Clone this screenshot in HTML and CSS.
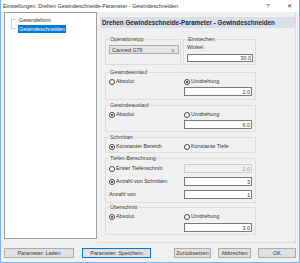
FILE: index.html
```html
<!DOCTYPE html>
<html>
<head>
<meta charset="utf-8">
<title>Einstellungen: Drehen Gewindeschneide-Parameter - Gewindeschneiden</title>
<link rel="stylesheet" href="styles.css">
</head>
<body>
<div class="window">
    <div class="titlebar">
        <span class="title">Einstellungen: Drehen Gewindeschneide-Parameter - Gewindeschneiden</span>
        <span class="tb-help">?</span>
        <span class="tb-close">&#x2715;</span>
    </div>
    <div class="client">
        <div class="tree">
            <svg class="tree-lines" width="7" height="14" viewBox="0 0 7 14">
                <path d="M0.5 3.5 H5 M0.5 3.5 V12.5 H5" stroke="#a0a0a0" stroke-width="1" stroke-dasharray="1 1" fill="none"/>
            </svg>
            <ul class="tree-items">
                <li>Gewindeform</li>
                <li class="sel">Gewindeschneiden</li>
            </ul>
        </div>
        <div class="panel">
            <h1 class="panel-head">Drehen Gewindeschneide-Parameter - Gewindeschneiden</h1>
            <div class="groups">
                <div class="toprow">
                    <fieldset class="grp grp-op">
                        <legend>Operationstyp</legend>
                        <div class="combo"><span>Canned G76</span><span class="arrow">&#x2228;</span></div>
                    </fieldset>
                    <fieldset class="grp grp-ein">
                        <legend>Einstechen</legend>
                        <div class="lbl">Winkel</div>
                        <input class="num" type="text" value="30.0">
                    </fieldset>
                </div>

                <fieldset class="grp grp-einlauf">
                    <legend>Gewindeeinlauf</legend>
                    <div class="row2 radios">
                        <label class="radio"><span class="rb"></span>Absolut</label>
                        <label class="radio"><span class="rb on"></span>Umdrehung</label>
                    </div>
                    <div class="row2 mt2">
                        <span></span>
                        <input class="num" type="text" value="2.0">
                    </div>
                </fieldset>

                <fieldset class="grp grp-auslauf">
                    <legend>Gewindeauslauf</legend>
                    <div class="row2 radios">
                        <label class="radio"><span class="rb on"></span>Absolut</label>
                        <label class="radio"><span class="rb"></span>Umdrehung</label>
                    </div>
                    <div class="row2 mt2">
                        <span></span>
                        <input class="num" type="text" value="6.0">
                    </div>
                </fieldset>

                <fieldset class="grp grp-schnitt">
                    <legend>Schnittart</legend>
                    <div class="row2 radios">
                        <label class="radio"><span class="rb on"></span>Konstanter Bereich</label>
                        <label class="radio"><span class="rb"></span>Konstante Tiefe</label>
                    </div>
                </fieldset>

                <fieldset class="grp grp-tiefe">
                    <legend>Tiefen-Berechnung</legend>
                    <div class="row2 trow first">
                        <label class="radio"><span class="rb"></span>Erster Tiefenschnitt</label>
                        <input class="num off" type="text" value="1.0" disabled>
                    </div>
                    <div class="row2 trow">
                        <label class="radio"><span class="rb on"></span>Anzahl von Schnitten:</label>
                        <input class="num" type="text" value="3">
                    </div>
                    <div class="row2 trow">
                        <span class="plain">Anzahl von</span>
                        <input class="num" type="text" value="1">
                    </div>
                </fieldset>

                <fieldset class="grp grp-ueber">
                    <legend>Überschnitt</legend>
                    <div class="row2 radios">
                        <label class="radio"><span class="rb on"></span>Absolut</label>
                        <label class="radio"><span class="rb"></span>Umdrehung</label>
                    </div>
                    <div class="row2 mt3">
                        <span></span>
                        <input class="num" type="text" value="3.0">
                    </div>
                </fieldset>
            </div>
        </div>
    </div>
    <div class="buttons">
        <button class="btn b-laden">Parameter: Laden</button>
        <button class="btn b-save">Parameter: Speichern</button>
        <button class="btn b-reset">Zurücksetzen</button>
        <button class="btn b-cancel">Abbrechen</button>
        <button class="btn b-ok">OK</button>
    </div>
</div>
</body>
</html>
```

FILE: styles.css
```css
html, body {
    margin: 0;
    padding: 0;
    background: #f0f0f0;
}
body {
    font-family: "Liberation Sans", Arial, sans-serif;
    font-size: 5.4px;
    color: #333333;
}
.window {
    box-sizing: border-box;
    width: 300px;
    height: 263px;
    border: 1px solid #7fb2e8;
    border-top: none;
    background: #f0f0f0;
}
.titlebar {
    height: 12px;
    background: #ffffff;
    display: flex;
    align-items: center;
    line-height: 12px;
}
.title {
    flex: 1;
    padding-left: 2px;
}
.tb-help {
    width: 26px;
    text-align: center;
    font-size: 6px;
    color: #444;
}
.tb-close {
    width: 16px;
    text-align: center;
    font-size: 6px;
    color: #444;
    margin-right: 2px;
}

/* main area */
.client {
    display: flex;
    padding: 0 3px;
}
.tree {
    box-sizing: border-box;
    width: 93px;
    height: 227px;
    border: 1px solid #9a9ea6;
    background: #ffffff;
    display: flex;
    align-items: flex-start;
    padding: 3px 0 0 6px;
}
.tree-lines {
    display: block;
}
.tree-items {
    list-style: none;
    margin: 0;
    padding: 0;
}
.tree-items li {
    height: 9px;
    line-height: 8px;
    padding: 0 1px;
}
.tree-items li.sel {
    background: #0078d7;
    color: #ffffff;
    height: 8px;
}

.panel {
    box-sizing: border-box;
    flex: 1;
    height: 231px;
    border-right: 1px solid #dadada;
    border-bottom: 1px solid #dadada;
}
.panel-head {
    margin: 5px 0 0 3px;
    height: 11px;
    line-height: 11px;
    background: #d9dee7;
    color: #1d2940;
    font-size: 6.3px;
    font-weight: bold;
    padding-left: 2px;
}
.groups {
    width: 151px;
    padding-left: 8px;
}
.toprow {
    display: flex;
    gap: 2px;
    margin-top: 8px;
}
fieldset.grp {
    box-sizing: border-box;
    margin: 0;
    padding: 0 3px;
    border: 1px solid #dcdcdc;
    min-width: 0;
}
fieldset.grp legend {
    padding: 0 1px;
    margin-left: 0;
    line-height: 6px;
    height: 6px;
    color: #3a3a3a;
}
.grp-op {
    width: 76px;
    height: 29px;
}
.grp-ein {
    flex: 1;
    height: 29px;
}
.grp-einlauf { height: 31px; margin-top: 4px !important; }
.grp-auslauf { height: 30px; margin-top: 2px !important; }
.grp-schnitt { height: 19px; margin-top: 2px !important; }
.grp-tiefe   { height: 48px; margin-top: 2px !important; }
.grp-ueber   { height: 31px; margin-top: 1px !important; }

.combo {
    box-sizing: border-box;
    margin-top: 3px;
    width: 70px;
    height: 9px;
    background: #e5e5e5;
    border: 1px solid #acacac;
    display: flex;
    align-items: center;
    justify-content: space-between;
    padding: 0 3px 0 2px;
}
.combo .arrow {
    font-size: 5px;
    color: #666;
}
.lbl {
    margin-top: 2px;
    line-height: 6px;
}
input.num {
    box-sizing: border-box;
    display: block;
    font: inherit;
    color: #333333;
    height: 8px;
    width: 66px;
    margin: 4px 0 0 0;
    padding: 0 1px;
    border: 1px solid #7a7a7a;
    background: #ffffff;
    text-align: right;
}
input.num.off {
    background: #f0f0f0;
    border-color: #cccccc;
    color: #8a8a8a;
}
.row2 {
    display: grid;
    grid-template-columns: 75px 68px;
    align-items: center;
}
.row2 input.num {
    margin: 0;
    width: 68px;
    height: 9px;
}
.radios {
    margin-top: 3px;
    height: 7px;
}
.mt2 { margin-top: 2px; }
.mt3 { margin-top: 3px; }
.trow { margin-top: 4px; }
.trow.first { margin-top: 3px; }
.radio {
    display: flex;
    align-items: center;
    line-height: 7px;
}
.plain {
    line-height: 7px;
}
.rb {
    box-sizing: border-box;
    width: 6px;
    height: 6px;
    border: 1px solid #444444;
    border-radius: 50%;
    background: #ffffff;
    margin-right: 1px;
    position: relative;
}
.rb.on::after {
    content: "";
    position: absolute;
    left: 1px;
    top: 1px;
    width: 2px;
    height: 2px;
    border-radius: 50%;
    background: #222222;
}

/* bottom buttons */
.buttons {
    display: flex;
    padding: 0 3px;
    margin-top: 5px;
}
.btn {
    box-sizing: border-box;
    height: 10px;
    font: inherit;
    color: #333333;
    background: #e1e1e1;
    border: 1px solid #adadad;
    padding: 0;
    line-height: 8px;
}
.b-laden { width: 70px; }
.b-save { width: 69px; margin-left: 8px; border-color: #0078d7; }
.b-reset { width: 37px; margin-left: auto; }
.b-cancel { width: 33px; margin-left: 7px; }
.b-ok { width: 38px; margin-left: 7px; }
```
